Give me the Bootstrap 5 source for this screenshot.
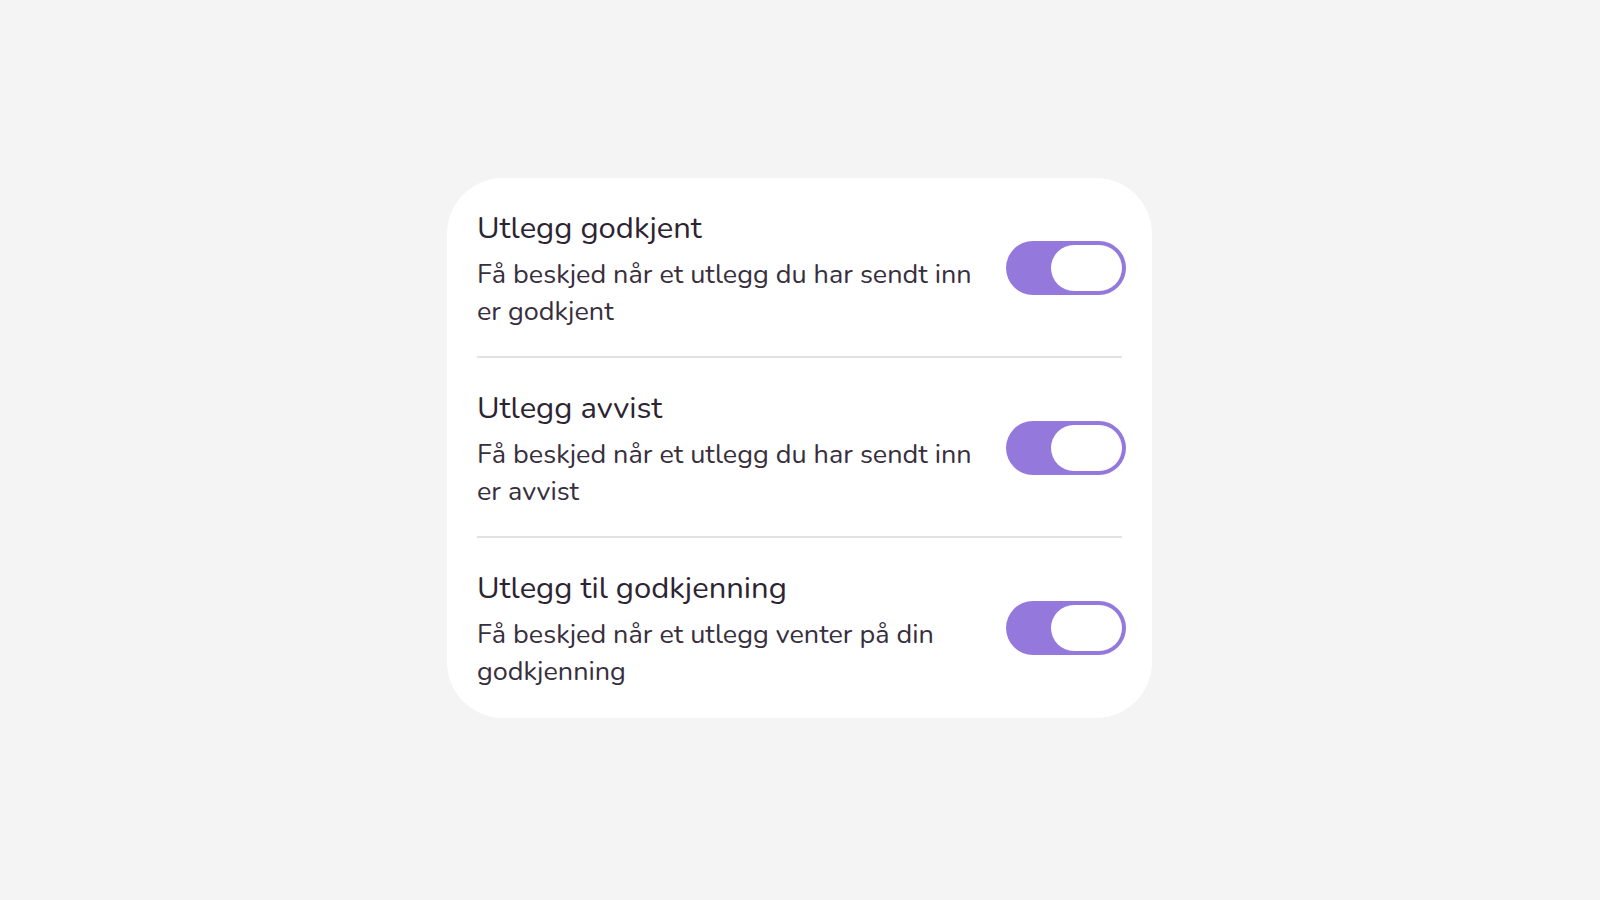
<!DOCTYPE html>
<html lang="nb">
<head>
<meta charset="utf-8">
<meta name="viewport" content="width=device-width, initial-scale=1">
<title>Varsler for utlegg</title>
<link href="https://cdn.jsdelivr.net/npm/bootstrap@5.3.0/dist/css/bootstrap.min.css" rel="stylesheet">
<style>
  body { background: #f4f4f4; color: #2d2433; font-family: Nunito, Lato, sans-serif; font-weight: 370; }
  main { padding: 0 1px 4px 0; }
  .settings-card { width: 100%; max-width: 705px; background: #fff; border: 0; border-radius: 56px; }
  .setting-row { padding: 28px 0 26px; margin: 0 30px; border-bottom: 2px solid #e2e2e2; }
  .setting-row:last-child { border-bottom-color: transparent; }
  .setting-title { font-size: 31px; line-height: 44px; margin-bottom: 6px; }
  .setting-text { font-size: 27px; line-height: 37px; color: #382f3e; }
  .setting-switch.form-check-input {
    width: 120px; height: 54px; margin: 0 -4px 0 0; border: 0; border-radius: 27px;
    background: #c9c9cf; position: relative; cursor: pointer;
  }
  .setting-switch.form-check-input:checked { background: #9478dc; }
  /* pill-shaped thumb */
  .setting-switch::before {
    content: ""; position: absolute; left: 4px; top: 4px; width: 71px; height: 46px;
    border-radius: 23px; background: #fff; transition: left .15s;
  }
  .setting-switch:checked::before { left: 45px; }
</style>
</head>
<body>
<main class="min-vh-100 d-flex align-items-center justify-content-center">
  <div class="card settings-card">
    <div class="setting-row d-flex align-items-center gap-4">
      <label class="flex-grow-1" for="approved">
        <span class="setting-title d-block">Utlegg godkjent</span>
        <span class="setting-text d-block">Få beskjed når et utlegg du har sendt inn er godkjent</span>
      </label>
      <input class="form-check-input setting-switch flex-shrink-0" type="checkbox" role="switch" id="approved" checked>
    </div>
    <div class="setting-row d-flex align-items-center gap-4">
      <label class="flex-grow-1" for="rejected">
        <span class="setting-title d-block">Utlegg avvist</span>
        <span class="setting-text d-block">Få beskjed når et utlegg du har sendt inn er avvist</span>
      </label>
      <input class="form-check-input setting-switch flex-shrink-0" type="checkbox" role="switch" id="rejected" checked>
    </div>
    <div class="setting-row d-flex align-items-center gap-4">
      <label class="flex-grow-1" for="pending">
        <span class="setting-title d-block">Utlegg til godkjenning</span>
        <span class="setting-text d-block">Få beskjed når et utlegg venter på din godkjenning</span>
      </label>
      <input class="form-check-input setting-switch flex-shrink-0" type="checkbox" role="switch" id="pending" checked>
    </div>
  </div>
</main>
<script src="https://cdn.jsdelivr.net/npm/bootstrap@5.3.0/dist/js/bootstrap.bundle.min.js"></script>
</body>
</html>
